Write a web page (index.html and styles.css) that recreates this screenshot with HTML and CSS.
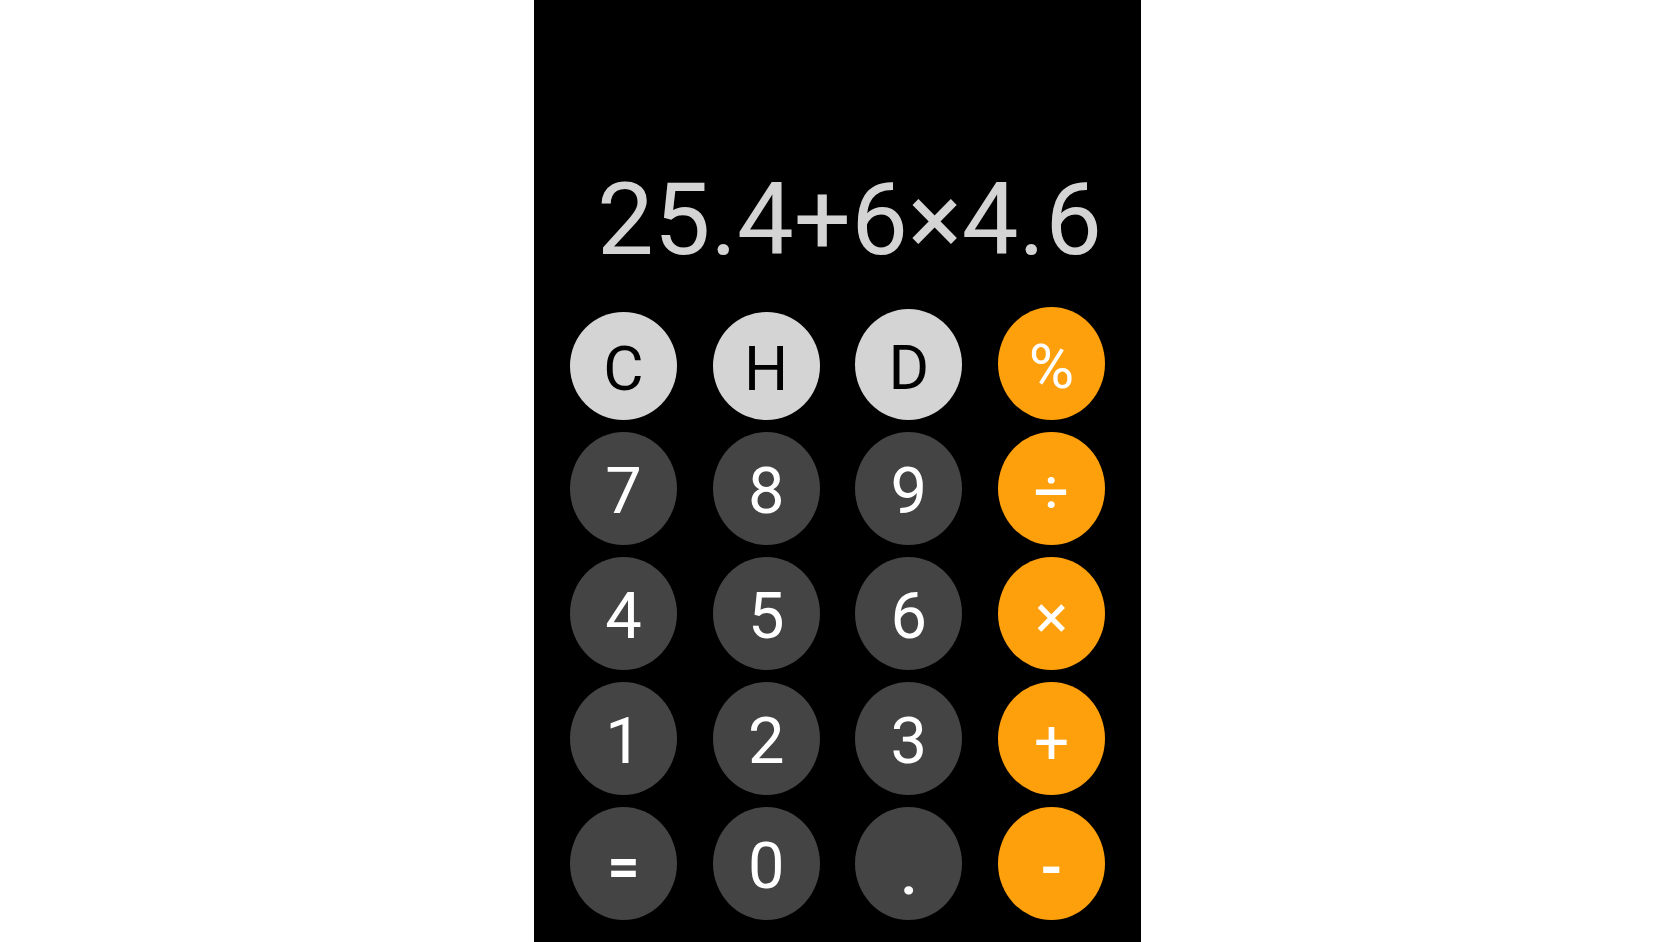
FILE: index.html
```html
<!DOCTYPE html>
<html lang="en">
<head>
<meta charset="utf-8">
<title>Calculator</title>
<link rel="stylesheet" href="styles.css">
</head>
<body>
<main class="calc">
  <div class="display"><span class="expr">25.4+6×4.6</span></div>
  <div class="keypad">
    <button class="key key-light key-c">C</button>
    <button class="key key-light key-h">H</button>
    <button class="key key-light key-d">D</button>
    <button class="key key-op">%</button>

    <button class="key key-num">7</button>
    <button class="key key-num">8</button>
    <button class="key key-num">9</button>
    <button class="key key-op">÷</button>

    <button class="key key-num">4</button>
    <button class="key key-num">5</button>
    <button class="key key-num">6</button>
    <button class="key key-op">×</button>

    <button class="key key-num">1</button>
    <button class="key key-num">2</button>
    <button class="key key-num">3</button>
    <button class="key key-op">+</button>

    <button class="key key-num key-eq">=</button>
    <button class="key key-num">0</button>
    <button class="key key-num key-dot">.</button>
    <button class="key key-op key-minus">-</button>
  </div>
</main>
</body>
</html>
```

FILE: styles.css
```css
html, body {
  margin: 0;
  padding: 0;
  background: #ffffff;
}

body {
  font-family: Roboto, "Liberation Sans", sans-serif;
}

.calc {
  width: 607px;
  height: 942px;
  margin: 0 auto;
  background: #000000;
  display: flex;
  flex-direction: column;
  box-sizing: border-box;
}

.display {
  height: 307px;
  box-sizing: border-box;
  padding: 0 39px 37px 0;
  display: flex;
  align-items: flex-end;
  justify-content: flex-end;
}

.expr {
  font-size: 101px;
  line-height: 100px;
  color: #d4d4d4;
  font-weight: 400;
  white-space: nowrap;
}

.keypad {
  display: grid;
  grid-template-columns: repeat(4, 107px);
  grid-auto-rows: 113px;
  justify-content: space-between;
  row-gap: 12px;
  padding: 0 36px;
}

.key {
  border: none;
  margin: 0;
  padding: 0;
  width: 107px;
  height: 113px;
  border-radius: 50%;
  font-family: Roboto, "Liberation Sans", sans-serif;
  font-size: 65px;
  font-weight: 400;
  line-height: 1;
  display: flex;
  align-items: center;
  justify-content: center;
  padding-top: 6px;
  box-sizing: border-box;
}

.key-light {
  background: #d4d4d4;
  color: #000000;
  font-size: 62px;
  align-self: end;
}

.key-c,
.key-h {
  height: 108px;
}

.key-d {
  height: 111px;
}

.key-num {
  background: #444444;
  color: #ffffff;
}

.key-op {
  background: #fe9f0c;
  color: #ffffff;
  font-size: 62px;
}

.key-eq {
  font-weight: 700;
  font-size: 56px;
}

.key-dot {
  font-size: 56px;
  font-weight: 700;
  padding-top: 22px;
}

.key-minus {
  font-weight: 700;
  font-size: 58px;
}
```
